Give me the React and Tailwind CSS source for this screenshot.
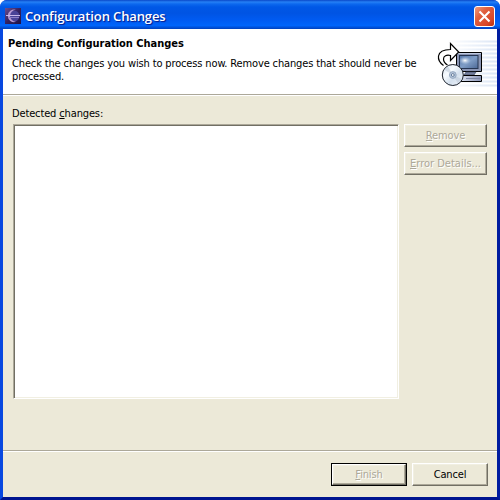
import React from "react";

const raised =
  "border border-t-white border-l-white border-r-[#716f64] border-b-[#716f64] shadow-[inset_-1px_-1px_0_#aca899,inset_1px_1px_0_#f1efe2]";

function Button({ children, className = "", disabled }) {
  return (
    <button
      className={`flex h-[23px] items-center justify-center bg-[#ece9d8] whitespace-nowrap ${
        disabled ? "text-[#aca899] [text-shadow:1px_1px_0_#fff]" : "text-black"
      } ${raised} ${className}`}
    >
      <span>{children}</span>
    </button>
  );
}

function EclipseIcon() {
  return (
    <svg width="16" height="16" viewBox="0 0 16 16" className="shrink-0">
      <defs>
        <linearGradient id="ecl" x1="0" y1="0" x2="1" y2="1">
          <stop offset="0" stopColor="#6a4f92" />
          <stop offset="0.5" stopColor="#35225f" />
          <stop offset="1" stopColor="#1e1248" />
        </linearGradient>
      </defs>
      <rect width="16" height="16" fill="url(#ecl)" />
      <circle cx="9" cy="8" r="5.5" fill="#4a4397" />
      <path d="M11 1.8A6.300 6.300 0 1 0 11 13.800A6.200 6.200 0 0 1 5 8A6.200 6.200 0 0 1 11 1.800Z" fill="#b79ad2" />
      <path d="M1 7.500h14" stroke="#c9b9ea" strokeWidth="1" />
      <path d="M4 9.500h10" stroke="#8d80c6" strokeWidth="1" />
    </svg>
  );
}

function WizardBanner() {
  return (
    <svg width="75" height="64" viewBox="422 30 75 64" className="shrink-0">
      <defs>
        <linearGradient id="fade" x1="0" x2="1">
          <stop offset="0" stopColor="#fff" />
          <stop offset="1" stopColor="#fff" stopOpacity="0" />
        </linearGradient>
        <linearGradient id="screen" x1="0" y1="0" x2="1" y2="1">
          <stop offset="0" stopColor="#5878aa" />
          <stop offset="0.5" stopColor="#7f9dc6" />
          <stop offset="1" stopColor="#4b6795" />
        </linearGradient>
        <radialGradient id="glare">
          <stop offset="0" stopColor="#fff" />
          <stop offset="1" stopColor="#b9cfe8" stopOpacity="0" />
        </radialGradient>
        <linearGradient id="metal" x1="0" x2="1">
          <stop offset="0" stopColor="#dbe2f0" />
          <stop offset="1" stopColor="#8993b5" />
        </linearGradient>
        <linearGradient id="disc" x1="0" y1="0" x2="1" y2="1">
          <stop offset="0" stopColor="#d5e0ec" />
          <stop offset="0.35" stopColor="#f7fbff" />
          <stop offset="0.6" stopColor="#d4e0ed" />
          <stop offset="1" stopColor="#f2f6fc" />
        </linearGradient>
      </defs>
      <path
        d="M448 41.500H497M448 45.500H497M448 49.500H497M448 53.500H497M448 57.500H497M448 61.500H497M448 65.500H497M448 69.500H497M448 73.500H497M448 77.500H497M448 81.500H497M448 85.500H497"
        stroke="#dce6f5"
        strokeWidth="2"
      />
      <rect x="447" y="38" width="50" height="50" fill="url(#fade)" />
      <path d="M456.500 52.500H481.500V71.500H456.500Z" fill="#8994b3" stroke="#000" />
      <path d="M457 53.500H481" stroke="#bfc9df" />
      <rect x="459.500" y="55.500" width="18.500" height="13" fill="url(#screen)" stroke="#263653" />
      <ellipse cx="465" cy="60.500" rx="6" ry="4" fill="url(#glare)" />
      <path d="M466 72H476L474 75H464Z" fill="#77819e" stroke="#34415e" strokeWidth="0.600" />
      <path d="M460.500 75.500H481.500V81.500H460.500Z" fill="url(#metal)" stroke="#000" />
      <path d="M466 78.500H480" stroke="#7a85a3" />
      <path
        d="M443.500 65.500C440 63 438 59.500 438.500 56C439.300 51.500 443.500 49.500 450.500 49.500V43.500L458.700 52L450.500 60.500V55.500C446.500 54.500 443.500 56 443.500 59C443.500 61.500 445 63.500 447.500 65"
        fill="#fff"
        stroke="#000"
        strokeWidth="1.200"
      />
      <circle cx="452.800" cy="75" r="10.500" fill="url(#disc)" stroke="#1c222c" />
      <path d="M452.800 75L444 69.500L448 66.300ZM452.800 75L462 79L458 83.500Z" fill="#b7c4d4" opacity="0.500" />
      <circle cx="452.800" cy="75" r="3.400" fill="#b5c5d9" stroke="#8c9fb9" strokeWidth="0.800" />
      <circle cx="452.800" cy="75" r="1.400" fill="#fff" stroke="#476388" strokeWidth="0.800" />
    </svg>
  );
}

export default function App() {
  return (
    <div className="h-[500px] w-[500px] overflow-hidden bg-white text-[11px] leading-[13px] tracking-[-0.14px] text-black font-['DejaVu_Sans_Condensed','DejaVu_Sans',sans-serif] [font-stretch:condensed]">
      <div className="flex h-full w-full flex-col overflow-hidden rounded-t-[7px] bg-[#0831d9]">
        <header className="flex h-[29px] shrink-0 items-center bg-[linear-gradient(180deg,#0a48c8_0%,#2580f5_7%,#0c68ee_14%,#0058e6_24%,#0054e3_45%,#005bf2_70%,#0065fb_88%,#0052dc_94%,#0041bd_100%)] pt-[3px] pr-[5px] pl-[5px]">
          <EclipseIcon />
          <h1 className="ml-[4px] grow whitespace-nowrap font-['Open_Sans','Noto_Sans',sans-serif] text-[13px] leading-[18px] font-semibold text-white [font-stretch:normal] [text-shadow:1px_1px_1px_#0a1883]">
            <span className="tracking-[-0.12px]">Configuration Changes</span>
          </h1>
          <button aria-label="Close" className="flex h-[21px] w-[21px] items-center justify-center rounded-[3px] border border-white bg-[linear-gradient(135deg,#ef9b7e_0%,#e0603f_35%,#d9482a_75%,#b7300c_100%)]">
            <svg width="13" height="13" viewBox="0 0 13 13">
              <path d="M1.500 1.500L11.500 11.500M11.500 1.500L1.500 11.500" stroke="#fff" strokeWidth="2.100" />
            </svg>
          </button>
        </header>
        <div className="flex min-h-0 grow flex-col border-x-[3px] border-b-[3px] border-l-[#0848e0] border-r-[#001ca0] border-b-[#001590] bg-[#ece9d8]">
          <section className="flex h-[65px] shrink-0 justify-between bg-white pt-px">
            <div className="min-w-0 pt-[7px] pl-[5px]">
              <h2 className="whitespace-nowrap font-bold">
                <span className="tracking-[-0.03px]">Pending Configuration Changes</span>
              </h2>
              <p className="mt-[7px] ml-[4px] whitespace-nowrap">
                <span>Check the changes you wish to process now. Remove changes that should never be</span>
                <br />
                <span>processed.</span>
              </p>
            </div>
            <WizardBanner />
          </section>
          <div className="h-[2px] shrink-0 border-t border-b border-t-[#aca899] border-b-white" />
          <main className="flex h-[354px] shrink-0 flex-col pt-[11px] pr-[10px] pl-[9px]">
            <label className="h-[17px] whitespace-nowrap">
              <span>
                Detected <u>c</u>hanges:
              </span>
            </label>
            <div className="flex pl-px">
              <div className="h-[275px] w-[386px] border border-t-[#aca899] border-l-[#aca899] border-r-white border-b-white bg-white shadow-[inset_1px_1px_0_#716f64,inset_-1px_-1px_0_#f1efe2]" />
              <div className="ml-[5px] flex w-[83px] flex-col gap-[5px]">
                <Button disabled>
                  <u>R</u>emove
                </Button>
                <Button disabled>
                  <span className="tracking-normal">
                    <u>E</u>rror Details...
                  </span>
                </Button>
              </div>
            </div>
          </main>
          <footer className="flex grow justify-end gap-[5px] border-t border-t-[#aca899] pt-[12px] pr-[9px] shadow-[inset_0_1px_0_#fff]">
            <div className="h-[23px] w-[76px] border border-black">
              <Button disabled className="h-[21px]! w-full">
                <u>F</u>inish
              </Button>
            </div>
            <Button className="w-[76px]">Cancel</Button>
          </footer>
        </div>
      </div>
    </div>
  );
}
